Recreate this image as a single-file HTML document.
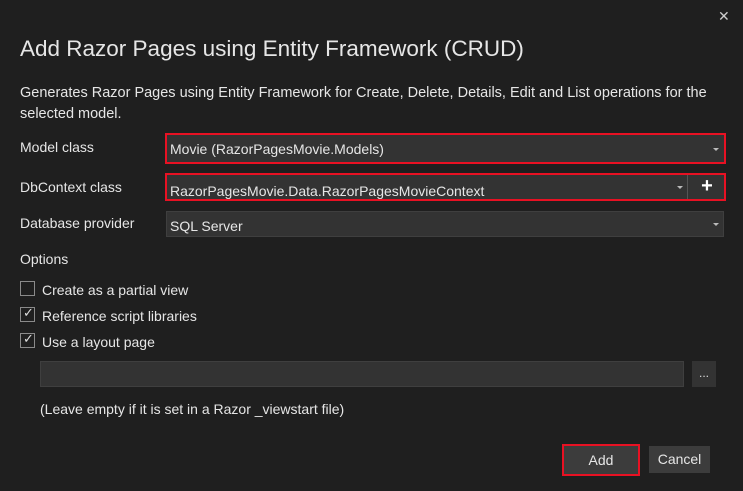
<!DOCTYPE html><html><head><style>
body{margin:0;width:743px;height:491px;background:#1f1f1f;font-family:"Liberation Sans",sans-serif;color:#e6e6e6;position:relative;overflow:hidden}
div{position:absolute;box-sizing:border-box}
.t{font-size:14px;white-space:nowrap}
.f{background:#333;border:1px solid #3f3f3f}
.red{border:2px solid #e81123}
.arr{width:0;height:0;border-left:3px solid transparent;border-right:3px solid transparent;border-top:3px solid #bbb}
.cb{width:15px;height:15px;border:1px solid #8a8a8a}
.cb span{position:absolute;left:2px;top:-3px;font-size:13px;color:#ddd}
</style></head><body>
<div class="t" style="left:718px;top:8px;font-size:14px;color:#ccc">✕</div>
<div style="left:20px;top:36px;font-size:22.5px;white-space:nowrap">Add Razor Pages using Entity Framework (CRUD)</div>
<div class="t" style="left:20px;top:83px;width:720px;white-space:normal;line-height:21px;font-size:14.5px">Generates Razor Pages using Entity Framework for Create, Delete, Details, Edit and List operations for the selected model.</div>
<div class="t" style="left:20px;top:139px">Model class</div>
<div class="red" style="left:165px;top:133px;width:561px;height:31px;background:#333"></div>
<div class="t" style="left:170px;top:141px">Movie (RazorPagesMovie.Models)</div>
<div class="arr" style="left:713px;top:148px"></div>
<div class="t" style="left:20px;top:179px">DbContext class</div>
<div class="red" style="left:165px;top:173px;width:561px;height:28px;background:#333;overflow:hidden"></div>
<div style="left:167px;top:175px;width:518px;height:24px;overflow:hidden"><div class="t" style="left:3px;top:8px">RazorPagesMovie.Data.RazorPagesMovieContext</div></div>
<div class="arr" style="left:677px;top:186px"></div>
<div style="left:687px;top:175px;width:1px;height:24px;background:#555"></div>
<div style="left:693px;top:175px;width:28px;height:24px;font-size:20px;line-height:22px;text-align:center;color:#fff;font-weight:bold">+</div>
<div class="t" style="left:20px;top:215px">Database provider</div>
<div class="f" style="left:166px;top:211px;width:558px;height:26px"></div>
<div class="t" style="left:170px;top:218px">SQL Server</div>
<div class="arr" style="left:713px;top:223px"></div>
<div class="t" style="left:20px;top:251px">Options</div>
<div class="cb" style="left:20px;top:281px"></div>
<div class="t" style="left:42px;top:282px">Create as a partial view</div>
<div class="cb" style="left:20px;top:307px"><span>✓</span></div>
<div class="t" style="left:42px;top:308px">Reference script libraries</div>
<div class="cb" style="left:20px;top:333px"><span>✓</span></div>
<div class="t" style="left:42px;top:334px">Use a layout page</div>
<div class="f" style="left:40px;top:361px;width:644px;height:26px"></div>
<div style="left:692px;top:361px;width:24px;height:26px;background:#333;color:#ddd;font-size:12px;text-align:center;line-height:24px">...</div>
<div class="t" style="left:40px;top:401px">(Leave empty if it is set in a Razor _viewstart file)</div>
<div class="red" style="left:562px;top:444px;width:78px;height:32px;background:#3c3c3c;font-size:14px;text-align:center;line-height:28px">Add</div>
<div style="left:649px;top:446px;width:61px;height:27px;background:#3c3c3c;font-size:14px;text-align:center;line-height:27px">Cancel</div>
</body></html>
